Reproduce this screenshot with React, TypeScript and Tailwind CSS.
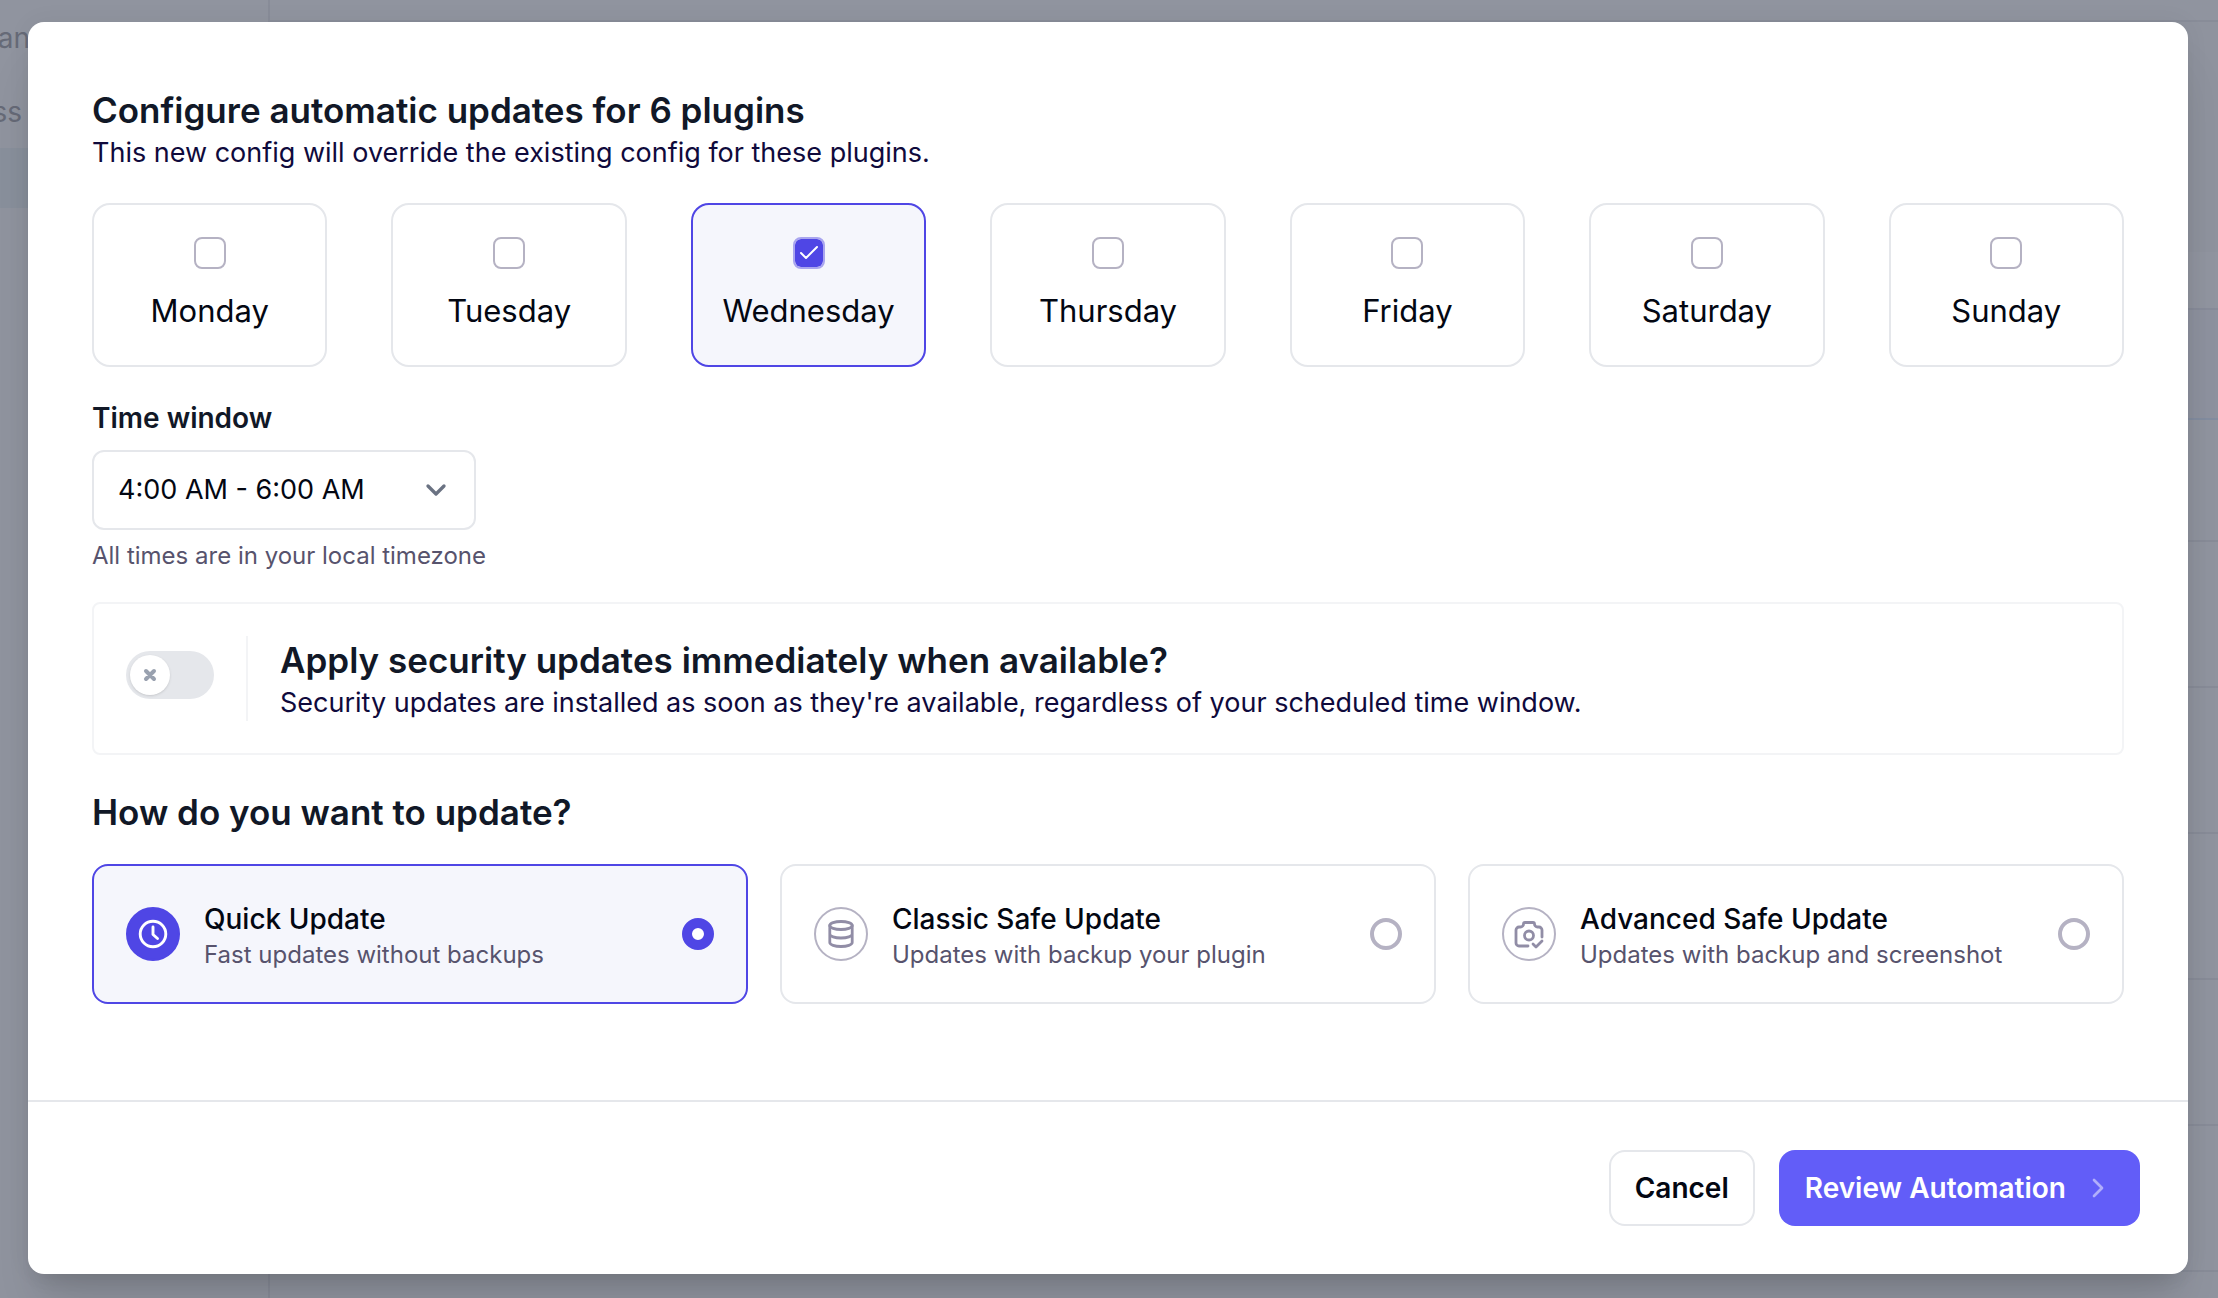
import { useState } from "react";
import { Check, ChevronDown, ChevronRight } from "lucide-react";

const days = ["Monday", "Tuesday", "Wednesday", "Thursday", "Friday", "Saturday", "Sunday"];

function ClockIcon() {
  return (
    <svg viewBox="0 0 32 32" className="size-8" fill="none" stroke="currentColor" strokeWidth="2.9" strokeLinecap="round" strokeLinejoin="round" aria-hidden="true">
      <circle cx="16" cy="16" r="12.8" />
      <path d="M16 9v7.500l4.500 4" />
    </svg>
  );
}

function DatabaseIcon() {
  return (
    <svg viewBox="0 0 32 32" className="size-8" fill="none" stroke="currentColor" strokeWidth="2.8" strokeLinecap="round" aria-hidden="true">
      <ellipse cx="16" cy="7.500" rx="11.200" ry="4" />
      <path d="M4.800 7.500v17c0 2.200 5 4 11.200 4s11.200-1.800 11.200-4v-17M4.800 16c0 2.200 5 4 11.200 4s11.200-1.800 11.200-4" />
    </svg>
  );
}

function CameraIcon() {
  return (
    <svg viewBox="0 0 32 32" className="size-8" fill="none" stroke="currentColor" strokeWidth="2.8" strokeLinecap="round" strokeLinejoin="round" aria-hidden="true">
      <path d="M15 28H6a3 3 0 0 1-3-3V12a3 3 0 0 1 3-3h1.500a3 3 0 0 0 3-3 1.500 1.500 0 0 1 1.500-1.500h8A1.500 1.500 0 0 1 21.500 6a3 3 0 0 0 3 3H26a3 3 0 0 1 3 3v7" />
      <circle cx="16" cy="17.500" r="4.500" />
      <path d="M20 26l3 3 6-6" />
    </svg>
  );
}

const modes = [
  { id: "quick", title: "Quick Update", text: "Fast updates without backups", Icon: ClockIcon },
  { id: "classic", title: "Classic Safe Update", text: "Updates with backup your plugin", Icon: DatabaseIcon },
  { id: "advanced", title: "Advanced Safe Update", text: "Updates with backup and screenshot", Icon: CameraIcon },
];

function Backdrop() {
  return (
    <div aria-hidden="true" className="absolute inset-0 -z-10 flex overflow-hidden bg-[#90949f] text-[28px] leading-10 text-[#666a77]">
      <div className="w-[270px] shrink-0 border-r-2 border-[#888c98]">
        <div className="flex h-[148px] flex-col gap-[34px] pt-[18px]">
          <span className="flex w-[30px] justify-end">an</span>
          <span className="flex w-[22px] justify-end">ss</span>
        </div>
        <div className="h-[60px] bg-[#89909c]" />
      </div>
      <div className="flex-1">
        <div className="h-[22px] border-b-2 border-[#888c98]" />
        <div className="h-[230px] bg-[#8f939e]" />
        <div className="h-[58px] border-b-2 border-[#888c9a] bg-[#9195a0]" />
        <div className="h-[110px] border-b-2 border-[#838da0] bg-[#8e929f]" />
        <div className="h-[122px] border-b-2 border-[#888c98]" />
        <div className="h-[146px] border-b-2 border-[#888c98]" />
        <div className="h-[146px] border-b-2 border-[#888c98]" />
        <div className="h-[146px] border-b-2 border-[#888c98]" />
        <div className="h-[146px] border-b-2 border-[#888c98]" />
        <div className="h-[146px] border-b-2 border-[#888c98]" />
      </div>
    </div>
  );
}

export default function App() {
  const [selected, setSelected] = useState<string[]>(["Wednesday"]);
  const [mode, setMode] = useState("quick");
  const [security, setSecurity] = useState(false);

  const toggleDay = (day: string) =>
    setSelected((now) => (now.includes(day) ? now.filter((d) => d !== day) : [...now, day]));

  return (
    <div className="relative isolate min-h-screen pt-[22px] pr-[30px] pb-6 pl-7 font-[Inter,sans-serif] text-[#030712]">
      <Backdrop />
      <div role="dialog" aria-labelledby="dialog-title" className="rounded-2xl bg-white shadow-[0_40px_50px_-10px_rgba(0,0,0,0.12),0_16px_20px_-12px_rgba(0,0,0,0.1),0_0_24px_rgba(0,0,0,0.05)]">
        <div className="px-16 pt-16 pb-24">
          <h1 id="dialog-title" className="text-[35px] leading-[48px] font-semibold text-[#111827]">Configure automatic updates for 6 plugins</h1>
          <p className="text-[27px] leading-[37px] text-[#0f0a3c]">This new config will override the existing config for these plugins.</p>

          <div className="mt-8 grid grid-cols-7 gap-16">
            {days.map((day) => {
              const on = selected.includes(day);
              return (
                <label key={day} className={`flex h-[164px] cursor-pointer flex-col items-center gap-[18px] rounded-[18px] border-2 pt-8 ${on ? "border-[#4f46e5] bg-[#f5f6fc]" : "border-gray-200"}`}>
                  <span className="grid size-8">
                    <input type="checkbox" checked={on} onChange={() => toggleDay(day)} className="col-start-1 row-start-1 size-8 appearance-none rounded-lg border-2 border-[#b5b2c3] bg-white checked:border-[#a9a5ef] checked:bg-[#4f46e5] checked:bg-clip-padding" />
                    {on && <Check className="pointer-events-none col-start-1 row-start-1 size-6 place-self-center text-white" strokeWidth={2} />}
                  </span>
                  <span className="text-[31px] leading-[48px]">{day}</span>
                </label>
              );
            })}
          </div>

          <label htmlFor="time-window" className="mt-[31px] block text-[28px] leading-10 font-semibold text-[#111827]">Time window</label>
          <div className="mt-3 grid w-96">
            <select id="time-window" className="col-start-1 row-start-1 h-20 appearance-none rounded-xl border-2 border-gray-200 bg-white px-6 text-[27px]">
              <option>4:00 AM - 6:00 AM</option>
              <option>6:00 AM - 8:00 AM</option>
            </select>
            <ChevronDown className="pointer-events-none col-start-1 row-start-1 mr-6 size-8 self-center justify-self-end text-gray-500" strokeWidth={2.5} />
          </div>
          <p className="mt-2 text-2xl leading-9 text-[#57536d]">All times are in your local timezone</p>

          <div className="mt-7 flex items-start rounded-lg border-2 border-gray-100 p-8">
            <button type="button" role="switch" aria-checked={security} aria-labelledby="security-title" onClick={() => setSecurity(!security)} className={`mt-[15px] flex h-12 w-[88px] shrink-0 items-center rounded-full p-1 ${security ? "justify-end bg-[#4f46e5]" : "bg-gray-200"}`}>
              <span className="flex size-10 items-center justify-center rounded-full bg-white shadow">
                <svg viewBox="0 0 12 12" className="size-6 text-gray-400" fill="none" stroke="currentColor" strokeWidth="2" aria-hidden="true">
                  <path d="M4 8l2-2m0 0l2-2M6 6L4 4m2 2l2 2" strokeLinecap="round" strokeLinejoin="round" />
                </svg>
              </span>
            </button>
            <div className="ml-8 border-l-2 border-gray-100 pl-8">
              <h2 id="security-title" className="text-[35px] leading-[48px] font-semibold text-[#111827]">Apply security updates immediately when available?</h2>
              <p className="text-[27px] leading-[37px] text-[#0f0a3c]">Security updates are installed as soon as they're available, regardless of your scheduled time window.</p>
            </div>
          </div>

          <h2 id="mode-title" className="mt-[33px] text-[35px] leading-[48px] font-semibold text-[#111827]">How do you want to update?</h2>
          <div role="radiogroup" aria-labelledby="mode-title" className="mt-7 grid grid-cols-3 gap-8">
            {modes.map(({ id, title, text, Icon }) => {
              const on = mode === id;
              return (
                <label key={id} className={`flex h-[140px] cursor-pointer items-center rounded-2xl border-2 px-8 ${on ? "border-[#4f46e5] bg-[#f5f6fc]" : "border-gray-200"}`}>
                  <span className={`flex size-[54px] shrink-0 items-center justify-center rounded-full border-2 ${on ? "border-[#4f46e5] bg-[#4f46e5] text-white" : "border-[#b5b2c3] text-[#918da6]"}`}>
                    <Icon />
                  </span>
                  <span className="ml-6 flex flex-1 flex-col pt-0.5">
                    <span className="text-[28px] leading-10 font-medium">{title}</span>
                    <span className="text-2xl leading-8 text-[#57536d]">{text}</span>
                  </span>
                  <input type="radio" name="mode" checked={on} onChange={() => setMode(id)} className="size-8 appearance-none rounded-full border-4 border-[#b5b2c3] bg-white checked:border-[10px] checked:border-[#4f46e5]" />
                </label>
              );
            })}
          </div>
        </div>

        <div className="flex justify-end gap-6 border-t-2 border-gray-200 p-12">
          <button type="button" className="h-[76px] rounded-2xl border-2 border-gray-200 px-6 text-[28px] font-semibold">Cancel</button>
          <button type="button" className="flex h-[76px] items-center gap-4 rounded-2xl bg-[#625df8] px-[26px] text-[28px] font-semibold text-white">
            Review Automation
            <ChevronRight className="size-8 text-[#b1aefb]" strokeWidth={2} />
          </button>
        </div>
      </div>
    </div>
  );
}
